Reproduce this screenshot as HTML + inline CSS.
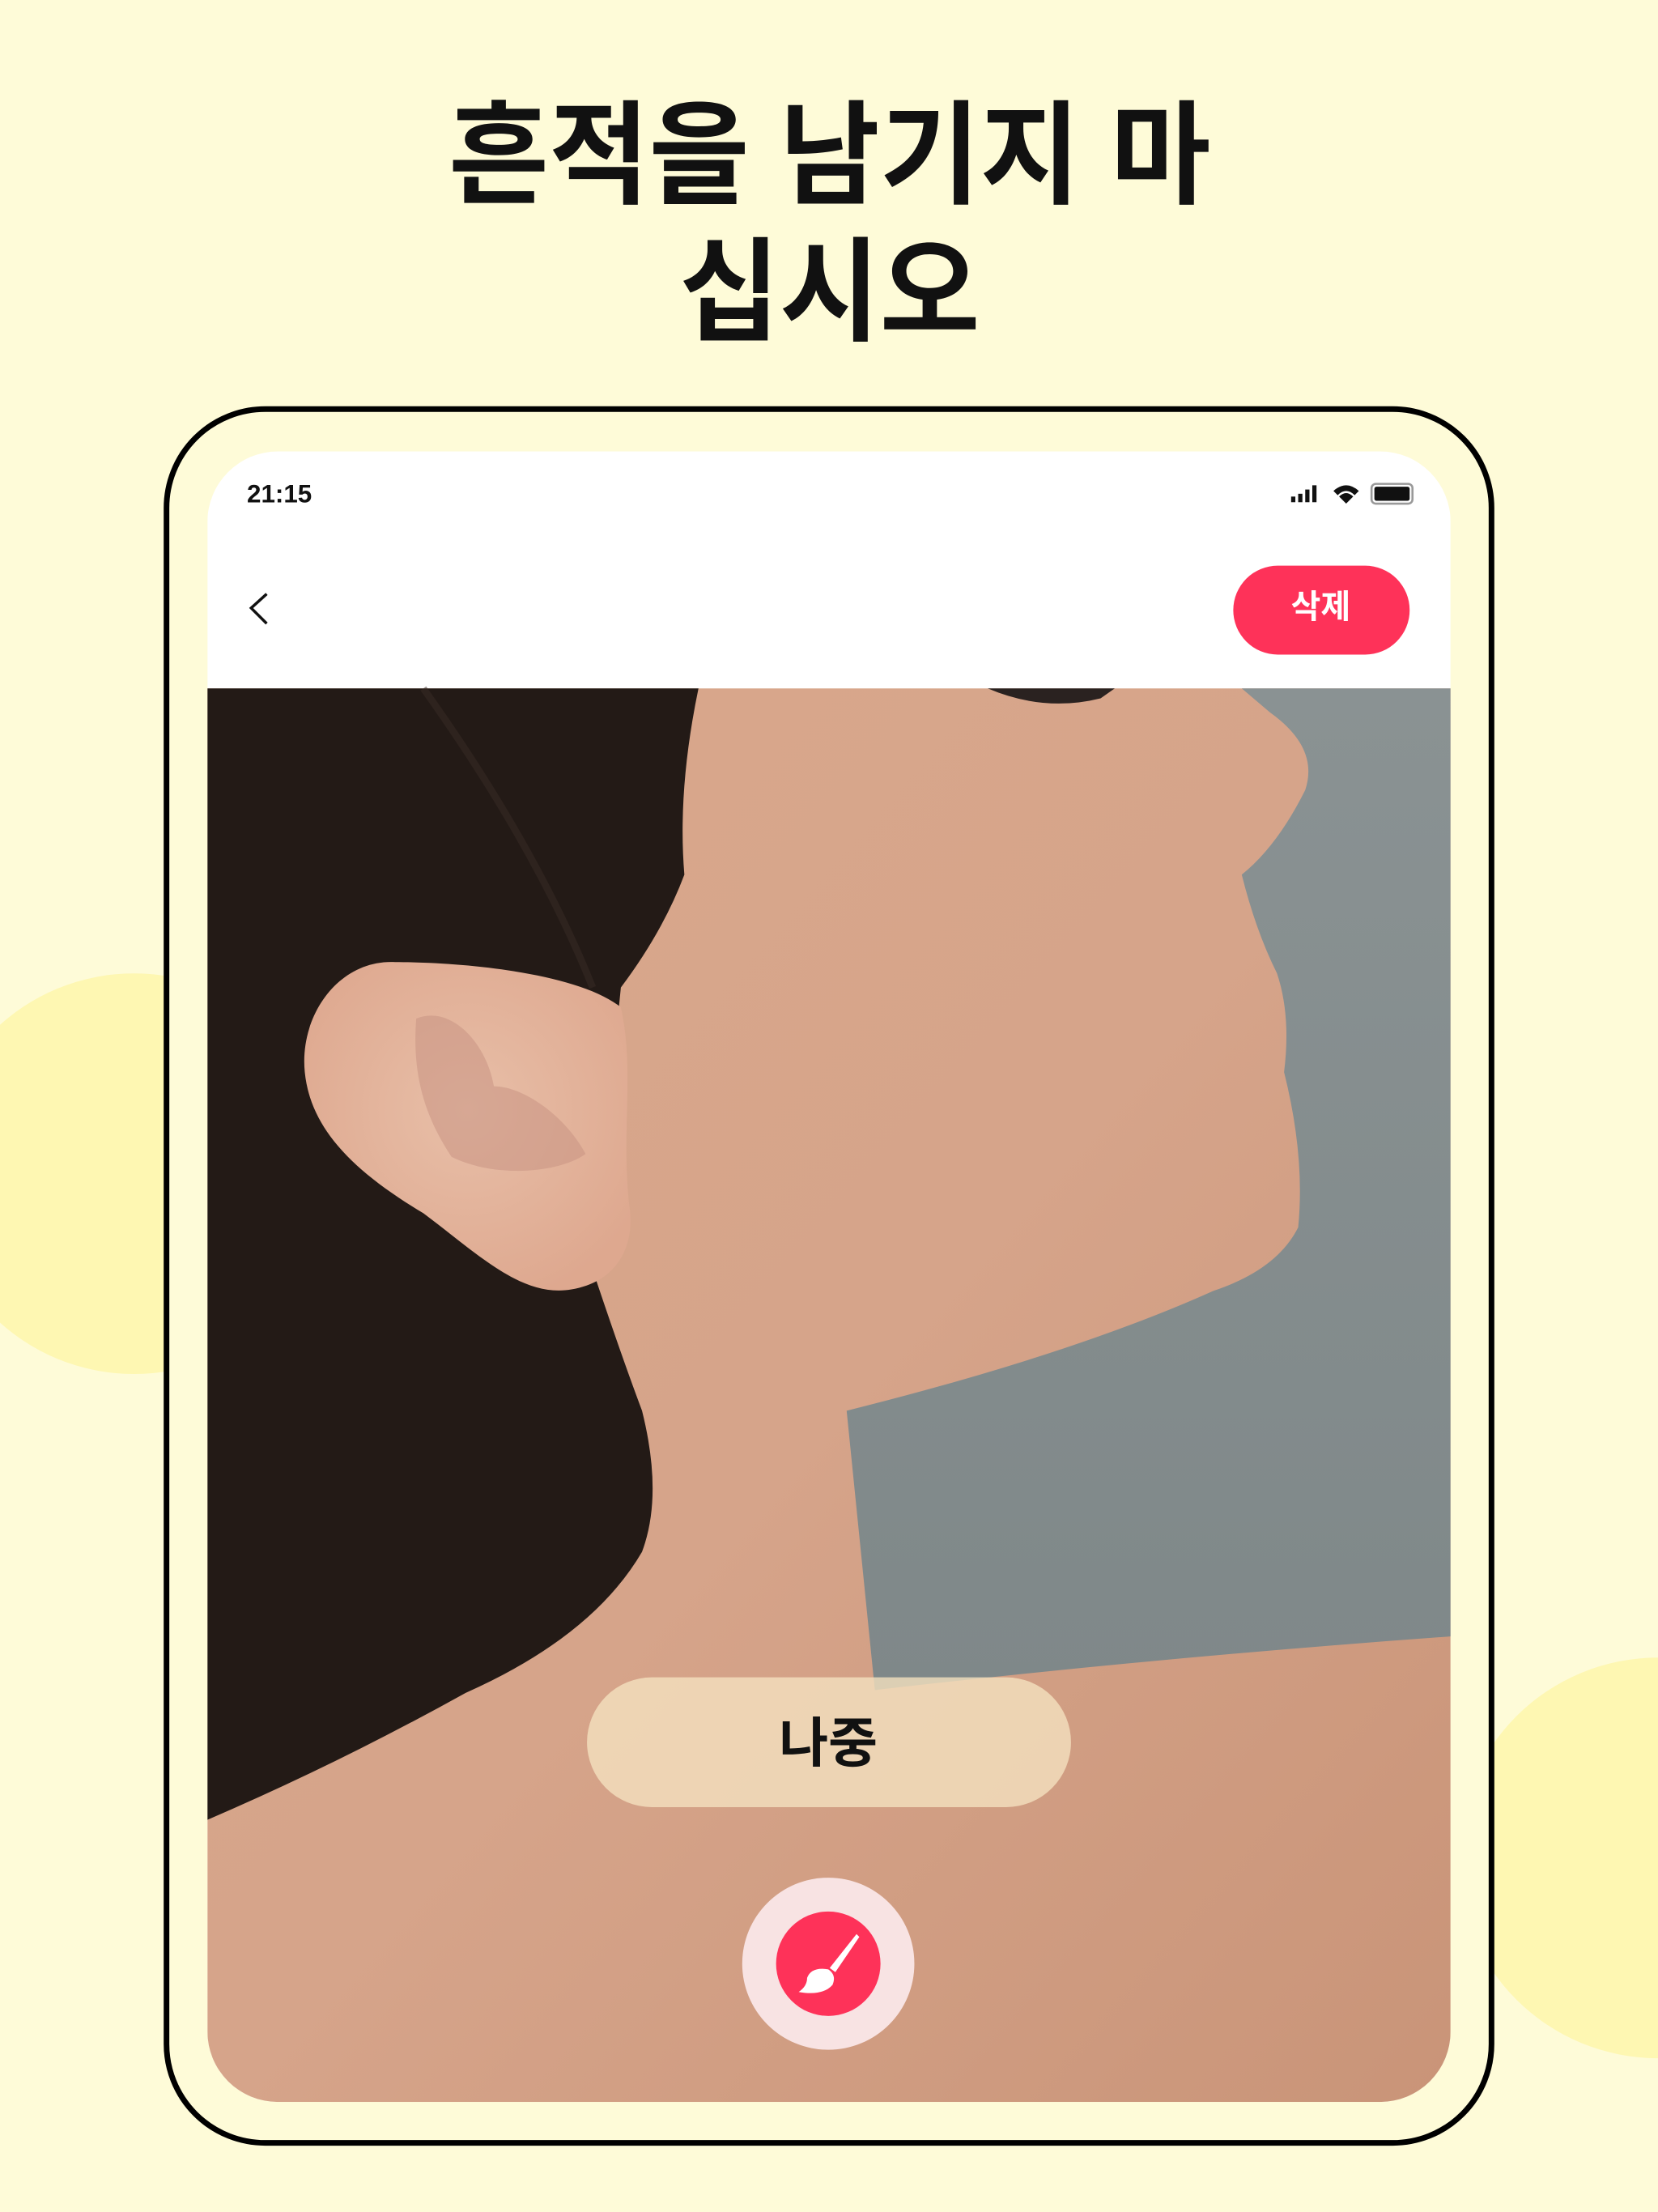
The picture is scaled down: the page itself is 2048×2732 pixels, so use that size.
<!DOCTYPE html>
<html><head><meta charset="utf-8"><style>
html,body{margin:0;padding:0;width:2048px;height:2732px;overflow:hidden;background:#fefbd8}
svg{display:block}
</style></head><body>
<svg width="2048" height="2732" viewBox="0 0 1175 1568" preserveAspectRatio="none" xmlns="http://www.w3.org/2000/svg">
<defs>
<clipPath id="scr"><rect x="147" y="320" width="881" height="1170" rx="50"/></clipPath>
<linearGradient id="skin" x1="0" y1="0" x2="1" y2="1">
<stop offset="0" stop-color="#d9a88c"/><stop offset="0.5" stop-color="#d6a48a"/><stop offset="1" stop-color="#c99478"/></linearGradient>
<linearGradient id="bg" x1="0" y1="0" x2="0" y2="1">
<stop offset="0" stop-color="#8a9293"/><stop offset="1" stop-color="#7f8889"/></linearGradient>
<radialGradient id="ear" cx="0.5" cy="0.45" r="0.6">
<stop offset="0" stop-color="#e8bfa8"/><stop offset="1" stop-color="#dea88f"/></radialGradient>
</defs>
<rect width="1175" height="1568" fill="#fefbd8"/>
<circle cx="95" cy="832" r="142" fill="#fef7b2"/>
<circle cx="1175" cy="1317" r="142" fill="#fef7b2"/>
<text x="588" y="138" text-anchor="middle" font-family="Liberation Sans, Noto Sans CJK KR, sans-serif" font-weight="700" font-size="80" textLength="540" lengthAdjust="spacingAndGlyphs" fill="#111">흔적을 남기지 마</text>
<text x="588" y="235" text-anchor="middle" font-family="Liberation Sans, Noto Sans CJK KR, sans-serif" font-weight="700" font-size="80" textLength="213" lengthAdjust="spacingAndGlyphs" fill="#111">십시오</text>
<rect x="118" y="290" width="939" height="1229" rx="70" fill="#fefbd8" stroke="#000" stroke-width="4"/>
<g clip-path="url(#scr)">
<rect x="147" y="320" width="881" height="1170" fill="#fff"/>
<rect x="147" y="488" width="881" height="1002" fill="url(#skin)"/>
<path d="M880 488 L1028 488 L1028 1160 Q820 1175 620 1198 L600 1000 Q760 960 860 915 Q905 900 920 870 Q925 820 910 760 Q915 720 905 690 Q890 660 880 620 Q905 600 925 560 Q935 530 900 505 Z" fill="url(#bg)"/>
<path d="M147 488 L495 488 Q480 560 485 620 Q470 660 440 700 L420 900 Q440 960 455 1000 Q470 1060 455 1100 Q420 1160 330 1200 Q240 1250 147 1290 Z" fill="#231a16"/>
<path d="M300 488 Q380 600 420 700" stroke="#3a2c25" stroke-width="5" fill="none" opacity="0.5"/>
<path d="M280 682 C240 680 212 720 216 760 C220 800 250 830 300 860 C340 890 370 920 405 914 C440 908 450 880 446 855 C440 800 450 760 440 714 C410 690 330 682 280 682 Z" fill="url(#ear)"/>
<path d="M295 722 C320 712 345 740 350 770 C370 770 400 790 415 818 C395 832 350 835 320 820 C300 790 292 760 295 722 Z" fill="#c99483" opacity="0.55"/>
<path d="M700 488 Q740 505 780 495 L790 488 Z" fill="#2a2220"/>
<rect x="416" y="1189" width="343" height="92" rx="46" fill="#f4e1bf" opacity="0.8"/>
<text x="587" y="1249" text-anchor="middle" font-family="Liberation Sans, Noto Sans CJK KR, sans-serif" font-weight="700" font-size="38" fill="#111">나중</text>
<circle cx="587" cy="1392" r="61" fill="#f8e3e3"/>
<circle cx="587" cy="1392" r="37" fill="#fe3259"/>
<path d="M607 1371 L609 1373 L592 1398 L588 1395 Z" fill="#fff"/>
<path d="M587 1396 Q593 1400 590 1407 Q583 1415 566 1412 Q572 1408 572 1402 Q575 1394 587 1396 Z" fill="#fff"/>
</g>
<text x="175" y="356" font-family="Liberation Sans, sans-serif" font-weight="700" font-size="18" fill="#111">21:15</text>
<g fill="#111">
<rect x="915" y="352" width="3" height="4"/><rect x="920" y="350" width="3" height="6"/><rect x="925" y="347" width="3" height="9"/><rect x="930" y="344" width="3" height="12"/>
<path d="M945 348 Q954 340 963 348 L960 351 Q954 345 948 351 Z M949 352 Q954 347 959 352 L954 357 Z"/>
<rect x="972" y="343" width="29" height="14" rx="3" fill="none" stroke="#999" stroke-width="1.5"/>
<rect x="974" y="345" width="25" height="10" rx="1.5"/>
</g>
<path d="M189 421 L178 431 L189 442" stroke="#111" stroke-width="2" fill="none"/>
<rect x="874" y="401" width="125" height="63" rx="31.5" fill="#fe3259"/>
<text x="936" y="438" text-anchor="middle" font-family="Liberation Sans, Noto Sans CJK KR, sans-serif" font-weight="700" font-size="23" fill="#fff">삭제</text>
</svg>
</body></html>
